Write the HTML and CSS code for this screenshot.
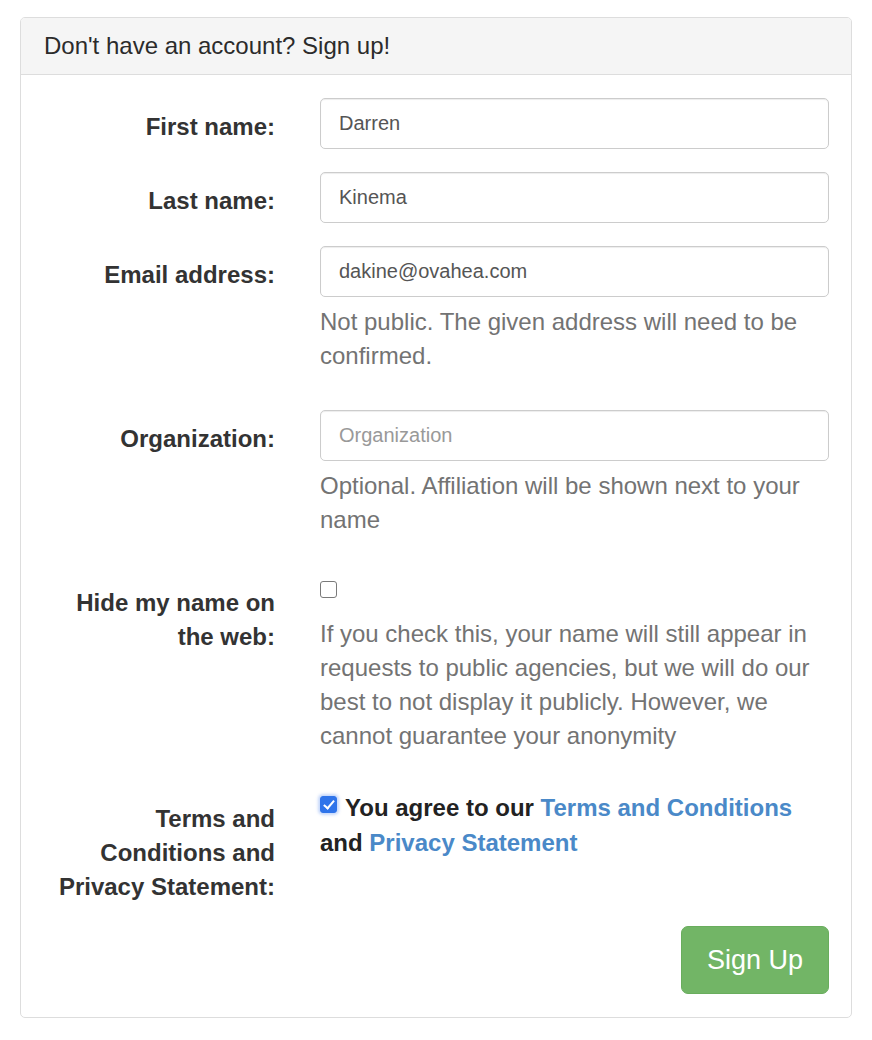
FILE: index.html
```html
<!DOCTYPE html>
<html lang="en">
<head>
<meta charset="utf-8">
<title>Sign up</title>
<link rel="stylesheet" href="styles.css">
</head>
<body>
<div class="panel">
  <div class="panel-heading">Don't have an account? Sign up!</div>
  <form class="panel-body">
    <div class="form-group">
      <label class="control-label" for="first">First name:</label>
      <div class="field"><input id="first" class="form-control" type="text" value="Darren"></div>
    </div>
    <div class="form-group">
      <label class="control-label" for="last">Last name:</label>
      <div class="field"><input id="last" class="form-control" type="text" value="Kinema"></div>
    </div>
    <div class="form-group">
      <label class="control-label" for="email">Email address:</label>
      <div class="field">
        <input id="email" class="form-control" type="email" value="dakine@ovahea.com">
        <p class="help-block">Not public. The given address will need to be confirmed.</p>
      </div>
    </div>
    <div class="form-group">
      <label class="control-label" for="org">Organization:</label>
      <div class="field">
        <input id="org" class="form-control" type="text" placeholder="Organization">
        <p class="help-block">Optional. Affiliation will be shown next to your name</p>
      </div>
    </div>
    <div class="form-group">
      <label class="control-label" for="hide">Hide my name on the web:</label>
      <div class="field">
        <div class="check-wrap"><input id="hide" class="cbox" type="checkbox"></div>
        <p class="help-block help-after-check">If you check this, your name will still appear in requests to public agencies, but we will do our best to not display it publicly. However, we cannot guarantee your anonymity</p>
      </div>
    </div>
    <div class="form-group">
      <label class="control-label" for="terms">Terms and Conditions and Privacy Statement:</label>
      <div class="field">
        <label class="agree" for="terms"><input id="terms" class="cbox cbox-focus" type="checkbox" checked>You agree to our <a href="#">Terms and Conditions</a> and <a href="#">Privacy Statement</a></label>
      </div>
    </div>
    <div class="actions">
      <button type="button" class="btn-success">Sign Up</button>
    </div>
  </form>
</div>
</body>
</html>
```

FILE: styles.css
```css
* { box-sizing: border-box; }

body {
  margin: 0;
  font-family: "Liberation Sans", Arial, Helvetica, sans-serif;
  font-size: 24px;
  line-height: 34px;
  color: #333;
  background: #fff;
}

.panel {
  margin: 17px 20px 0 20px;
  border: 1px solid #ddd;
  border-radius: 5px;
  background: #fff;
}

.panel-heading {
  background: #f5f5f5;
  border-bottom: 1px solid #ddd;
  border-radius: 4px 4px 0 0;
  padding: 11px 23px;
  font-size: 24px;
  line-height: 34px;
  color: #2b2b2b;
}

.panel-body {
  padding: 23px 22px 23px 22px;
}

.form-group {
  display: grid;
  grid-template-columns: 232px 1fr;
  column-gap: 45px;
  margin-bottom: 23px;
}

.control-label {
  font-weight: bold;
  text-align: right;
  padding-top: 12px;
  line-height: 34px;
}

.form-control {
  display: block;
  width: 100%;
  height: 51px;
  padding: 10px 18px;
  font-family: inherit;
  font-size: 20px;
  line-height: 29px;
  color: #555;
  background: #fff;
  border: 1px solid #ccc;
  border-radius: 5px;
  box-shadow: inset 0 1px 1px rgba(0, 0, 0, 0.075);
  outline: none;
}

.form-control::placeholder {
  color: #999;
}

.help-block {
  margin: 8px 0 14px 0;
  color: #737373;
  line-height: 34px;
}

.check-wrap {
  height: 43px;
  padding-top: 7px;
}

.help-after-check {
  margin-top: 0;
}

.cbox {
  -webkit-appearance: none;
  appearance: none;
  display: inline-block;
  position: relative;
  width: 17px;
  height: 17px;
  margin: 0;
  border: 1px solid #7a7a7a;
  border-radius: 3px;
  background: #fff;
  vertical-align: top;
}

.cbox:checked {
  background: #2f74ea;
  border-color: #2f74ea;
}

.cbox:checked::after {
  content: "";
  position: absolute;
  left: 5px;
  top: 1px;
  width: 4px;
  height: 9px;
  border: solid #fff;
  border-width: 0 2.5px 2.5px 0;
  transform: rotate(40deg);
}

.cbox-focus {
  box-shadow: 0 0 3px 2px rgba(90, 140, 240, 0.35);
}

.agree {
  display: block;
  font-weight: bold;
  color: #222;
  line-height: 35px;
}

.agree .cbox {
  margin: 6px 8px 0 0;
}

.agree a {
  color: #4a89c8;
  text-decoration: none;
}

.actions {
  display: flex;
  justify-content: flex-end;
  margin-top: -1px;
}

.btn-success {
  font-family: inherit;
  font-size: 27px;
  line-height: 36px;
  padding: 15px 25px;
  color: #fff;
  background: #72b566;
  border: 1px solid #69ad5d;
  border-radius: 7px;
  cursor: pointer;
}
```
